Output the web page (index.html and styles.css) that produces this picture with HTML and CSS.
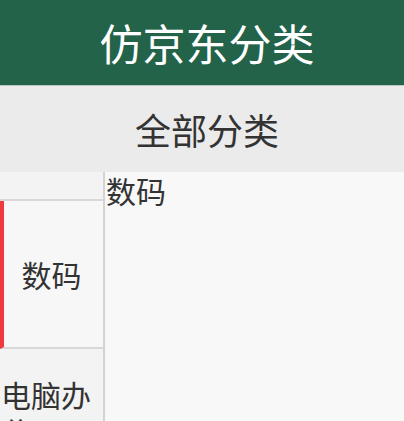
FILE: index.html
```html
<!DOCTYPE html>
<html lang="zh-CN">
<head>
<meta charset="utf-8">
<title>仿京东分类</title>
<link rel="stylesheet" href="styles.css">
</head>
<body>
<div class="app">
  <header class="topbar">仿京东分类</header>
  <div class="subbar">全部分类</div>
  <div class="main">
    <aside class="side">
      <div class="item item-partial"></div>
      <div class="item item-active">数码</div>
      <div class="item item-left">电脑办公</div>
    </aside>
    <section class="content">
      <div class="content-title">数码</div>
    </section>
  </div>
</div>
</body>
</html>
```
FILE: styles.css
```css
* { box-sizing: border-box; }
html, body { margin: 0; padding: 0; }
body {
  font-family: "Noto Sans CJK SC", "Noto Sans", sans-serif;
  background: #f8f8f8;
  width: 404px;
  height: 421px;
  overflow: hidden;
}
.app { display: flex; flex-direction: column; height: 421px; }
.topbar {
  height: 86px;
  background: #23634a;
  border-bottom: 1px solid #b9c9c1;
  color: #ffffff;
  font-size: 43px;
  line-height: 84px;
  text-align: center;
  padding-left: 10px;
}
.subbar {
  height: 86px;
  background: #ebebeb;
  color: #333333;
  font-size: 36px;
  line-height: 86px;
  text-align: center;
  padding-left: 10px;
}
.main { flex: 1; display: flex; min-height: 0; }
.side {
  width: 105px;
  flex: none;
  background: #f3f3f3;
  border-right: 2px solid #d3d3d3;
  display: flex;
  flex-direction: column;
  overflow: hidden;
}
.item {
  flex: none;
  height: 148px;
  border-bottom: 2px solid #d8d8d8;
  font-size: 30px;
  color: #333333;
  line-height: 36px;
  display: flex;
  align-items: center;
  justify-content: center;
  text-align: center;
}
.item-partial { height: 29px; background: #f3f3f3; }
.item-active {
  background: #f7f7f7;
  border-left: 4px solid #ee3a3f;
  padding-right: 4px;
}
.item-left {
  justify-content: flex-start;
  align-items: flex-start;
  text-align: left;
  padding-left: 1px;
  padding-top: 27px;
}
.content { flex: 1; background: #f8f8f8; }
.content-title {
  font-size: 30px;
  line-height: 36px;
  color: #333333;
  padding-left: 1px;
}
```
